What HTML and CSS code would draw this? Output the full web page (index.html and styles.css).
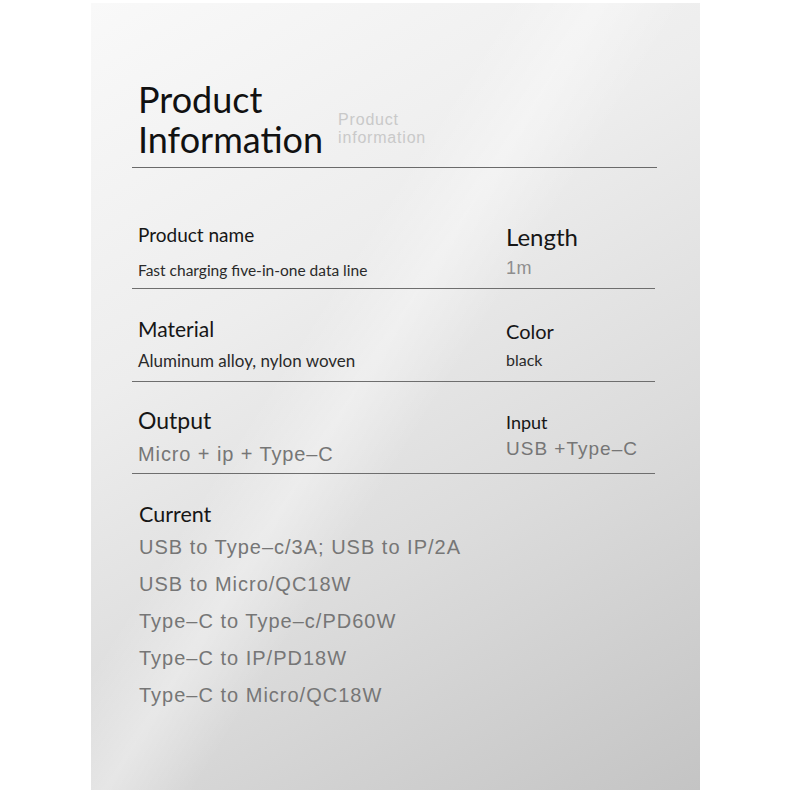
FILE: index.html
```html
<!DOCTYPE html>
<html lang="en">
<head>
    <meta charset="UTF-8">
    <meta name="viewport" content="width=device-width, initial-scale=1.0">
    <title>Product Information</title>
    <link rel="stylesheet" href="styles.css">
</head>
<body>
    <div class="sheet">

        <!-- Heading -->
        <div class="heading">
            <h1>Product<br>Information</h1>
            <p class="subtitle">Product<br>information</p>
        </div>

        <!-- Spec rows -->
        <div class="spec-row first">
            <div class="cell">
                <div class="label name-label">Product name</div>
                <div class="value name-value">Fast charging five-in-one data line</div>
            </div>
            <div class="cell">
                <div class="label length-label">Length</div>
                <div class="value thin length-value">1m</div>
            </div>
        </div>

        <div class="spec-row second">
            <div class="cell">
                <div class="label material-label">Material</div>
                <div class="value material-value">Aluminum alloy, nylon woven</div>
            </div>
            <div class="cell">
                <div class="label color-label">Color</div>
                <div class="value color-value">black</div>
            </div>
        </div>

        <div class="spec-row third">
            <div class="cell">
                <div class="label output-label">Output</div>
                <div class="value thin output-value">Micro + ip + Type–C</div>
            </div>
            <div class="cell">
                <div class="label input-label">Input</div>
                <div class="value thin input-value">USB +Type–C</div>
            </div>
        </div>

        <!-- Current list -->
        <div class="current">
            <div class="label current-label">Current</div>
            <ul class="current-list">
                <li>USB to Type–c/3A; USB to IP/2A</li>
                <li>USB to Micro/QC18W</li>
                <li>Type–C to Type–c/PD60W</li>
                <li>Type–C to IP/PD18W</li>
                <li>Type–C to Micro/QC18W</li>
            </ul>
        </div>

    </div>
</body>
</html>
```

FILE: styles.css
```css
body {
    margin: 0;
    background-color: #fff;
    font-family: Lato, "Noto Sans", sans-serif;
}

.sheet {
    margin: 3px 0 0 91px;
    width: 609px;
    height: 787px;
    box-sizing: border-box;
    padding: 0 45px 0 41px;
    overflow: hidden;
    background:
        linear-gradient(122deg, rgba(255, 255, 255, 0) 38%, rgba(255, 255, 255, 0.35) 46%, rgba(255, 255, 255, 0) 54%),
        linear-gradient(150deg, #f9f9f9 0%, #ededed 35%, #dcdcdc 65%, #c4c4c4 100%);
}

/* Heading */
.heading {
    display: flex;
    align-items: flex-end;
    padding: 76px 0 8px 6px;
    border-bottom: 1px solid #6a6a6a;
    margin-right: -2px;
}

h1 {
    margin: 0;
    font-size: 36px;
    line-height: 40px;
    font-weight: 400;
    color: #111;
}

.subtitle {
    margin: 0 0 12px 15px;
    font-family: "Liberation Sans", Arial, sans-serif;
    font-size: 16px;
    line-height: 18px;
    letter-spacing: 0.8px;
    color: #c9c9c9;
}

/* Rows */
.spec-row {
    display: grid;
    grid-template-columns: 368px 1fr;
    padding-left: 6px;
    border-bottom: 1px solid #6e6e6e;
}

.label {
    color: #161616;
}

.value {
    color: #2a2a2a;
}

.thin {
    font-family: "Liberation Sans", Arial, sans-serif;
    color: #767676;
}

.first {
    padding: 55px 0 6px 6px;
}

.name-label {
    font-size: 19px;
    line-height: 24px;
}

.name-value {
    margin-top: 11px;
    font-size: 15.5px;
    line-height: 24px;
}

.length-label {
    font-size: 24px;
    line-height: 28px;
}

.length-value {
    margin-top: 5px;
    font-size: 18px;
    line-height: 24px;
    letter-spacing: 0.5px;
    color: #8e8e8e;
}

.second {
    padding: 27px 0 9px 6px;
}

.material-label {
    font-size: 21px;
    line-height: 26px;
}

.material-value {
    margin-top: 8px;
    font-size: 17px;
    line-height: 22px;
}

.color-label {
    margin-top: 2px;
    font-size: 20px;
    line-height: 26px;
}

.color-value {
    margin-top: 5px;
    font-size: 16px;
    line-height: 22px;
}

.third {
    padding: 24px 0 6px 6px;
}

.output-label {
    font-size: 23px;
    line-height: 28px;
}

.output-value {
    margin-top: 7px;
    font-size: 20px;
    line-height: 26px;
    letter-spacing: 0.9px;
}

.input-label {
    margin-top: 4px;
    font-size: 18px;
    line-height: 24px;
}

.input-value {
    margin-top: 2px;
    font-size: 19px;
    line-height: 26px;
    letter-spacing: 1px;
}

/* Current */
.current {
    padding: 27px 0 0 7px;
}

.current-label {
    font-size: 21.5px;
    line-height: 26px;
}

.current-list {
    list-style: none;
    margin: 2px 0 0;
    padding: 0;
    font-family: "Liberation Sans", Arial, sans-serif;
    font-size: 20px;
    line-height: 37px;
    letter-spacing: 1px;
    color: #767676;
}
```
